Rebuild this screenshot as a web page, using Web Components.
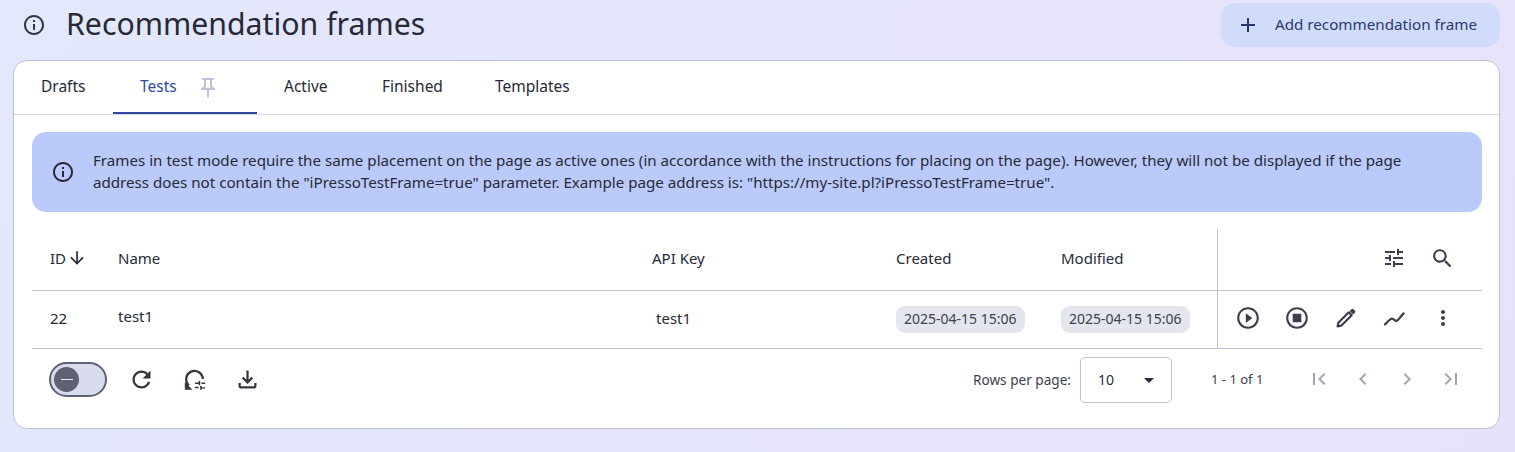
<!DOCTYPE html>
<html>
<head>
<meta charset="utf-8">
<style>
  html, body { margin: 0; height: 452px; overflow: hidden; }
  body {
    background: linear-gradient(110deg, #e3e8fc 0%, #e7e2fb 100%);
    font-family: "Noto Sans", "Liberation Sans", sans-serif;
    color: #272a36;
  }
</style>
</head>
<body>
<app-page>
  <page-header slot="header" title-text="Recommendation frames" action="Add recommendation frame"></page-header>
  <main-card>
    <tab-bar></tab-bar>
    <info-banner>Frames in test mode require the same placement on the page as active ones (in accordance with the instructions for placing on the page). However, they will not be displayed if the page address does not contain the "iPressoTestFrame=true" parameter. Example page address is: "https://my-site.pl?iPressoTestFrame=true".</info-banner>
    <frames-table></frames-table>
    <table-footer></table-footer>
  </main-card>
</app-page>

<script>
const ICONS = {
  info: `<path d="M11 7h2v2h-2zm0 4h2v6h-2zm1-9C6.48 2 2 6.48 2 12s4.48 10 10 10 10-4.48 10-10S17.52 2 12 2zm0 18c-4.41 0-8-3.59-8-8s3.59-8 8-8 8 3.59 8 8-3.59 8-8 8z"/>`,
  add: `<path d="M19 13h-6v6h-2v-6H5v-2h6V5h2v6h6v2z"/>`,
  pin: `<path d="M14 4v5c0 1.12.37 2.16 1 3H9c.65-.86 1-1.9 1-3V4h4m3-2H7c-.55 0-1 .45-1 1s.45 1 1 1h1v5c0 1.66-1.34 3-3 3v2h5.97v7l1 1 1-1v-7H19v-2c-1.66 0-3-1.34-3-3V4h1c.55 0 1-.45 1-1s-.45-1-1-1z"/>`,
  down: `<path d="M20 12l-1.41-1.41L13 16.17V4h-2v12.17l-5.58-5.59L4 12l8 8 8-8z"/>`,
  tune: `<path d="M3 17v2h6v-2H3zM3 5v2h10V5H3zm10 16v-2h8v-2h-8v-2h-2v6h2zM7 9v2H3v2h4v2h2V9H7zm14 4v-2H11v2h10zm-6-4h2V7h4V5h-4V3h-2v6z"/>`,
  search: `<path d="M15.5 14h-.79l-.28-.27C15.41 12.59 16 11.11 16 9.5 16 5.91 13.09 3 9.5 3S3 5.91 3 9.5 5.91 16 9.5 16c1.61 0 3.09-.59 4.23-1.57l.27.28v.79l5 4.99L20.49 19l-4.99-5zm-6 0C7.01 14 5 11.99 5 9.5S7.01 5 9.5 5 14 7.01 14 9.5 11.99 14 9.5 14z"/>`,
  play: `<path d="M10 16.5l6-4.5-6-4.5v9zM12 2C6.48 2 2 6.48 2 12s4.48 10 10 10 10-4.48 10-10S17.52 2 12 2zm0 18c-4.41 0-8-3.59-8-8s3.59-8 8-8 8 3.59 8 8-3.59 8-8 8z"/>`,
  stop: `<path d="M8 16h8V8H8v8zM12 2C6.48 2 2 6.48 2 12s4.48 10 10 10 10-4.48 10-10S17.52 2 12 2zm0 18c-4.41 0-8-3.59-8-8s3.59-8 8-8 8 3.59 8 8-3.59 8-8 8z"/>`,
  pen: `<path d="M15.6 4.9l1.5-1.5a2 2 0 0 1 2.8 0l.8.8a2 2 0 0 1 0 2.8l-1.5 1.5z"/><path d="M3.6 20.4l.7-3.6L14.8 6.3l2.9 2.9L7.2 19.7z" fill="none" stroke="currentColor" stroke-width="2.2" stroke-linejoin="round"/>`,
  chart: `<path d="M3 18.4C5 16.4 8 12.6 10 12.6S12.6 15 14.2 15 19 10 21.6 7.4" fill="none" stroke="currentColor" stroke-width="2.2" stroke-linecap="round" stroke-linejoin="round"/>`,
  more: `<path d="M12 8c1.1 0 2-.9 2-2s-.9-2-2-2-2 .9-2 2 .9 2 2 2zm0 2c-1.1 0-2 .9-2 2s.9 2 2 2 2-.9 2-2-.9-2-2-2zm0 6c-1.1 0-2 .9-2 2s.9 2 2 2 2-.9 2-2-.9-2-2-2z"/>`,
  refresh: `<path d="M17.65 6.35C16.2 4.9 14.21 4 12 4c-4.42 0-7.99 3.58-7.99 8s3.57 8 7.99 8c3.73 0 6.84-2.55 7.73-6h-2.08c-.82 2.33-3.04 4-5.65 4-3.31 0-6-2.69-6-6s2.69-6 6-6c1.66 0 3.14.69 4.22 1.78L13 11h7V4l-2.35 2.35z"/>`,
  reload: `<path d="M7 17.2A7.4 7.4 0 1 1 19.4 11.6" fill="none" stroke="currentColor" stroke-width="2"/><path d="M3.4 14.2V21h6.8z"/><path d="M12.5 14.6h3.2v-1.2h1.4v3.8h-1.4V16h-3.2zM18.2 14.6h3.3V16h-3.3zM12.5 18.4h3.2v1.4h-3.2zM17 17.8h1.4v1h3.1v1.2h-3.1v1.2H17z"/>`,
  download: `<path d="M18 15v3H6v-3H4v3c0 1.1.9 2 2 2h12c1.1 0 2-.9 2-2v-3h-2zm-1-4l-1.41-1.41L13 12.17V4h-2v8.17L8.41 9.59 7 11l5 5 5-5z"/>`,
  first: `<path d="M18.41 16.59L13.82 12l4.59-4.59L17 6l-6 6 6 6zM6 6h2v12H6z"/>`,
  prev: `<path d="M15.41 7.41L14 6l-6 6 6 6 1.41-1.41L10.83 12z"/>`,
  next: `<path d="M10 6L8.59 7.41 13.17 12l-4.58 4.59L10 18l6-6z"/>`,
  last: `<path d="M5.59 7.41L10.18 12l-4.59 4.59L7 18l6-6-6-6zM16 6h2v12h-2z"/>`,
  drop: `<path d="M7 10l5 5 5-5z"/>`,
};

function icon(name, size = 24) {
  return `<svg width="${size}" height="${size}" viewBox="0 0 24 24" fill="currentColor" aria-hidden="true">${ICONS[name]}</svg>`;
}

class AppPage extends HTMLElement {
  constructor() {
    super();
    this.attachShadow({ mode: "open" });
    this.shadowRoot.innerHTML = /* html */`
      <style>
        :host { display: flex; flex-direction: column; padding: 3px 15px 0 13px; }
      </style>
      <slot name="header"></slot>
      <slot></slot>
    `;
  }
}

class PageHeader extends HTMLElement {
  constructor() {
    super();
    this.attachShadow({ mode: "open" });
  }

  connectedCallback() {
    this.shadowRoot.innerHTML = /* html */`
      <style>
        :host { display: flex; align-items: center; justify-content: space-between; height: 44px; margin-bottom: 13px; }
        .left { display: flex; align-items: center; gap: 20px; padding-left: 9px; }
        .left svg { color: #33363f; }
        h1 { margin: -2px 0 0; font-size: 30.25px; font-weight: 400; color: #272a36; line-height: 44px; }
        button {
          display: flex; align-items: center; gap: 15px; height: 44px; width: 279px; box-sizing: border-box;
          padding: 0 0 0 15px; border: 0; border-radius: 14px; background: #d1dcfb; color: #29396f;
          font: 450 15.2px "Noto Sans", sans-serif;
        }
        button span { margin-top: -2px; }
      </style>
      <div class="left">${icon("info")}<h1>${this.getAttribute("title-text")}</h1></div>
      <button>${icon("add")}<span>${this.getAttribute("action")}</span></button>
    `;
  }
}

class MainCard extends HTMLElement {
  constructor() {
    super();
    this.attachShadow({ mode: "open" });
    this.shadowRoot.innerHTML = /* html */`
      <style>
        :host {
          display: block; height: 369px; box-sizing: border-box; background: #fff;
          border: 1px solid #bcc1d6; border-radius: 14px; overflow: hidden;
        }
      </style>
      <slot></slot>
    `;
  }
}

class TabBar extends HTMLElement {
  constructor() {
    super();
    this.attachShadow({ mode: "open" });
    const tabs = [["Drafts", 99], ["Tests", 144], ["Active", 98], ["Finished", 113], ["Templates", 132]];
    this.shadowRoot.innerHTML = /* html */`
      <style>
        :host { display: flex; height: 54px; box-sizing: border-box; border-bottom: 1px solid #d5daec; font-size: 15.5px; color: #272a36; }
        .tab { display: flex; align-items: center; box-sizing: border-box; padding: 0 0 4px 27px; height: 53px; }
        .tab.on { color: #2f4a9f; border-bottom: 2px solid #2f4a9f; padding-bottom: 2px; }
        .tab svg { color: #bcc2d6; margin-left: 19px; transform: translateY(2px); }
      </style>
      ${tabs.map(([label, w]) => `
        <div class="tab ${label === "Tests" ? "on" : ""}" style="width:${w}px">
          <span>${label}</span>${label === "Tests" ? icon("pin", 24) : ""}
        </div>`).join("")}
    `;
  }
}

class InfoBanner extends HTMLElement {
  constructor() {
    super();
    this.attachShadow({ mode: "open" });
    this.shadowRoot.innerHTML = /* html */`
      <style>
        :host {
          display: flex; align-items: center; gap: 18px; box-sizing: border-box;
          height: 80px; margin: 17px 17px 17px 18px; padding: 0 30px 0 19px;
          background: #bacbfb; border-radius: 14px; font-size: 15.15px; line-height: 22px; color: #272a36;
        }
        svg { flex: none; color: #272a36; }
        div { margin-top: -2px; }
      </style>
      ${icon("info")}
      <div><slot></slot></div>
    `;
  }
}

class FramesTable extends HTMLElement {
  constructor() {
    super();
    this.attachShadow({ mode: "open" });
    this.shadowRoot.innerHTML = /* html */`
      <style>
        :host {
          display: grid; margin: 0 17px 0 18px; font-size: 15px; color: #272a36;
          grid-template-columns: 86px 534px 244px 165px 156px 1fr;
          grid-template-rows: 62px 58px;
        }
        .c { display: flex; align-items: center; box-sizing: border-box; padding-bottom: 3px; border-bottom: 1px solid #bcc1d6; }
        .c.id { padding-left: 18px; }
        .c.api { padding-left: 4px; }
        .up { transform: translateY(-2px); }
        .gap { gap: 1px; }
        .chip {
          display: inline-flex; align-items: center; box-sizing: border-box; height: 27px; padding: 0 8px 1px; border-radius: 9px;
          background: #e4e6ee; font-size: 14px; color: #3d404c;
        }
        .c.dates { padding-bottom: 1px; }
        .acts { border-left: 1px solid #bcc1d6; color: #3d404c; justify-content: flex-end; padding-right: 15px; }
        .acts span { display: flex; width: 48.6px; justify-content: center; }
      </style>
      <div class="c id gap">ID ${icon("down", 20)}</div>
      <div class="c">Name</div>
      <div class="c">API Key</div>
      <div class="c">Created</div>
      <div class="c">Modified</div>
      <div class="c acts"><span>${icon("tune")}</span><span>${icon("search", 25)}</span></div>

      <div class="c id">22</div>
      <div class="c"><span class="up">test1</span></div>
      <div class="c api">test1</div>
      <div class="c dates"><span class="chip">2025-04-15 15:06</span></div>
      <div class="c dates"><span class="chip">2025-04-15 15:06</span></div>
      <div class="c acts">
        <span>${icon("play", 26)}</span><span>${icon("stop", 26)}</span><span>${icon("pen")}</span><span>${icon("chart")}</span><span>${icon("more")}</span>
      </div>
    `;
  }
}

class TableFooter extends HTMLElement {
  constructor() {
    super();
    this.attachShadow({ mode: "open" });
    this.shadowRoot.innerHTML = /* html */`
      <style>
        :host { display: flex; align-items: center; margin: 13px 17px 0 35px; height: 35px; font-size: 13.6px; color: #3d404c; }
        .switch {
          display: flex; align-items: center; box-sizing: border-box; width: 58px; height: 35px; padding-left: 3px;
          background: #d9dcec; border: 2px solid #5f6274; border-radius: 18px;
        }
        .thumb {
          display: flex; align-items: center; justify-content: center; width: 25px; height: 25px;
          border-radius: 50%; background: #5f6274;
        }
        .thumb i { display: block; width: 12px; height: 1.5px; background: #e4e6f0; }
        .tools { display: flex; align-items: center; gap: 26px; margin-left: 21px; color: #33363f; flex: 1; }
        .tools svg { display: block; }
        .select {
          display: flex; align-items: center; justify-content: space-between; box-sizing: border-box;
          width: 92px; height: 46px; margin-left: 9px; padding: 0 16px 0 17px;
          border: 1px solid #bcc1d6; border-radius: 5px; font-size: 14px; color: #272a36;
        }
        .select svg { margin-right: -6px; color: #272a36; }
        .range { margin-left: 39px; width: 96px; font-size: 13px; transform: translateY(-1px); }
        .pager { display: flex; align-items: center; gap: 20px; color: #a3a6b1; margin-right: 19px; transform: translateY(-1px); }
      </style>
      <div class="switch"><div class="thumb"><i></i></div></div>
      <div class="tools">${icon("refresh", 27)}${icon("reload", 27)}${icon("download", 27)}</div>
      <span>Rows per page:</span>
      <div class="select"><span>10</span>${icon("drop", 24)}</div>
      <span class="range">1 - 1 of 1</span>
      <div class="pager">${icon("first")}${icon("prev")}${icon("next")}${icon("last")}</div>
    `;
  }
}

customElements.define("app-page", AppPage);
customElements.define("page-header", PageHeader);
customElements.define("main-card", MainCard);
customElements.define("tab-bar", TabBar);
customElements.define("info-banner", InfoBanner);
customElements.define("frames-table", FramesTable);
customElements.define("table-footer", TableFooter);
</script>
</body>
</html>
